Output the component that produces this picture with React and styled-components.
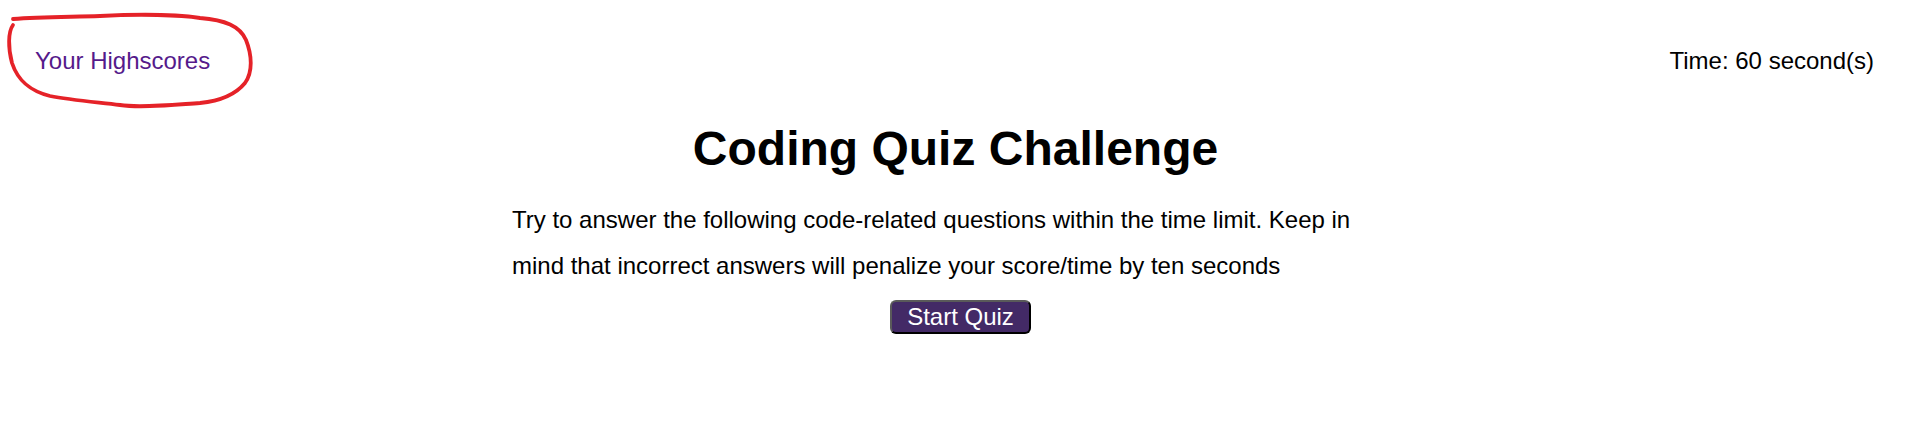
import React from "react";
import styled, { createGlobalStyle } from "styled-components";

const Global = createGlobalStyle`
  html, body {
    margin: 0;
    padding: 0;
    background: #ffffff;
  }
  body {
    font-family: "Liberation Sans", Arial, sans-serif;
    font-size: 24px;
    color: #000000;
  }
`;

const Page = styled.div`
  position: relative;
  width: 100%;
  min-height: 421px;
`;

const Header = styled.header`
  display: flex;
  justify-content: space-between;
  align-items: center;
  padding: 47px 37px 0 35px;
  line-height: 28px;
`;

const HighscoresLink = styled.a`
  color: #551a8b;
  text-decoration: none;
  cursor: pointer;
`;

const Timer = styled.div`
  color: #000000;
`;

const Main = styled.main`
  display: flex;
  flex-direction: column;
  align-items: center;
`;

const Title = styled.h1`
  margin: 46px 0 0 0;
  font-size: 48px;
  line-height: 56px;
  font-weight: 700;
`;

const Intro = styled.p`
  width: 887px;
  margin: 20px 0 0 0;
  line-height: 46px;
  text-align: left;
`;

const StartButton = styled.button`
  margin: 11px 0 0 10px;
  height: 34px;
  padding: 0 15px;
  font-family: "Liberation Sans", Arial, sans-serif;
  font-size: 24px;
  line-height: 28px;
  color: #ffffff;
  background: #432a66;
  border-width: 2px;
  border-style: solid;
  border-color: #5a5a5a #000000 #000000 #5a5a5a;
  border-radius: 6px;
  cursor: pointer;
`;

const Annotation = styled.svg`
  position: absolute;
  left: 0;
  top: 0;
  pointer-events: none;
`;

export default function App() {
  return (
    <Page>
      <Global />
      <Header>
        <HighscoresLink href="#highscores">Your Highscores</HighscoresLink>
        <Timer>Time: 60 second(s)</Timer>
      </Header>
      <Main>
        <Title>Coding Quiz Challenge</Title>
        <Intro>
          Try to answer the following code-related questions within the time
          limit. Keep in mind that incorrect answers will penalize your
          score/time by ten seconds
        </Intro>
        <StartButton>Start Quiz</StartButton>
      </Main>
      <Annotation width="270" height="120" viewBox="0 0 270 120">
        <path
          d="M 13 19 C 40 17, 70 17, 100 16 C 140 14, 180 15, 200 18 C 225 20, 240 26, 246 40 C 252 55, 253 72, 245 83 C 236 94, 220 101, 200 103 C 170 105, 140 108, 120 105 C 95 102, 70 100, 50 96 C 30 91, 18 81, 12 63 C 8 48, 8 32, 13 25"
          fill="none"
          stroke="#e52228"
          strokeWidth="3.8"
          strokeLinecap="round"
          strokeLinejoin="round"
        />
      </Annotation>
    </Page>
  );
}
